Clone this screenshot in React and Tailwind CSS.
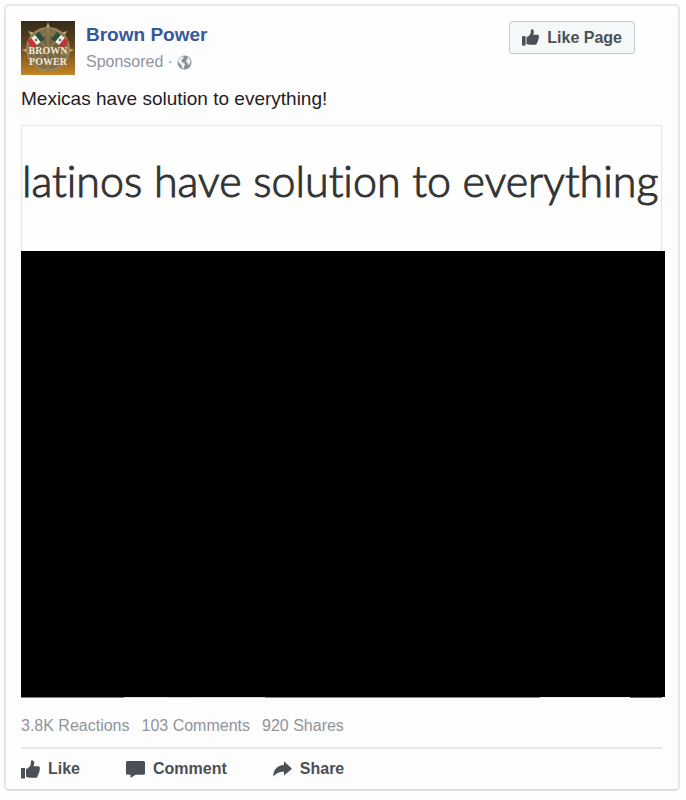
import React from "react";

function ThumbIcon({ className }) {
  return (
    <svg viewBox="0 0 19 19" className={className} fill="currentColor" aria-hidden="true">
      <path d="M0 8h4v10.500H0z" />
      <path d="M5 9.300 C7.500 8.300 9.400 6.300 9.800 3.800 L10 1.200 C10.100 .4 10.700 0 11.400 .2 C12.800 .6 13.400 1.900 13.200 3.600 L12.500 6.300 H17 C18.500 6.300 19.200 7.400 18.600 8.500 C19.200 9.300 19 10.500 18.200 11 C18.600 11.900 18.300 13 17.500 13.400 C17.800 14.300 17.400 15.200 16.600 15.600 C16.800 16.900 15.900 17.700 14.600 17.700 H9.500 C7.800 17.700 6.500 17.300 5 16.800z" />
    </svg>
  );
}

function CommentIcon() {
  return (
    <svg viewBox="0 0 19 17" className="h-[17px] w-[19px]" fill="currentColor" aria-hidden="true">
      <path d="M1.500 0h16Q19 0 19 1.500v10.800q0 1.500-1.500 1.500H9.500L4.600 17v-3.200H1.500Q0 13.800 0 12.300V1.500Q0 0 1.500 0z" />
    </svg>
  );
}

function ShareIcon() {
  return (
    <svg viewBox="0 0 19 16" className="h-4 w-[19px]" fill="currentColor" aria-hidden="true">
      <path d="M11 .3 18.500 7.200Q19 7.700 18.500 8.200L11 14.500V10.700C6.500 10.400 3.200 12 .3 15.600C.2 9 4 4.400 11 4z" />
    </svg>
  );
}

function GlobeIcon() {
  return (
    <svg viewBox="0 0 15 15" className="h-[15px] w-[15px]" role="img" aria-label="Public">
      <circle cx="7.500" cy="7.500" r="7" fill="#8b9095" />
      <path d="M.8 6 2.200 3.200 4.600 1.400 6.800 1.600 6.400 3.600 4.800 4.500 4.400 6.600 6.800 7.900 8.300 9 7.400 10.800 6.700 13.600 5 12.800 4.300 10.300 2.800 8.600z" fill="#f1f2f3" />
      <path d="M10 2 12.400 3.500 13.600 6.200 12.800 8.800 11.400 10.200 10.700 8.200 9.300 7 9.200 5 10.600 4.200z" fill="#f1f2f3" />
    </svg>
  );
}

function Flag({ transform, left, right }) {
  return (
    <g transform={transform}>
      <rect x="-7.500" y="-4.500" width="5" height="9" fill={left} />
      <rect x="-2.500" y="-4.500" width="5" height="9" fill="#f4f1e8" />
      <rect x="2.500" y="-4.500" width="5" height="9" fill={right} />
      <circle r="1.400" fill="#7d7450" />
    </g>
  );
}

function Avatar() {
  return (
    <svg viewBox="0 0 54 54" className="h-[54px] w-[54px] shrink-0" role="img" aria-label="Brown Power logo">
      <defs>
        <linearGradient id="ground" x1="0" y1="0" x2="0" y2="1">
          <stop offset="0" stopColor="#352a19" />
          <stop offset=".45" stopColor="#5e4723" />
          <stop offset=".8" stopColor="#a06d22" />
          <stop offset="1" stopColor="#c38628" />
        </linearGradient>
      </defs>
      <rect width="54" height="54" fill="url(#ground)" />
      <path d="M27 1 29 7H25zM7 10 14 12 11 16zM46 10 43 16 40 12zM1 29 7 27V32zM53 29 47 27V32z" fill="#bea675" />
      <circle cx="27" cy="28" r="21" fill="#806d4a" stroke="#9a8459" strokeWidth="2" />
      <circle cx="27" cy="28" r="15" fill="#76633f" stroke="#8b7650" strokeWidth="2" />
      <path d="M27 7V49M12 13 42 43M42 13 12 43" stroke="#8d7851" strokeWidth="2" />
      <Flag transform="translate(15 19) rotate(-38)" left="#c92f37" right="#28513c" />
      <Flag transform="translate(39 19) rotate(38)" left="#28513c" right="#c92f37" />
      <g fill="#f3e9d8" fontFamily="'Liberation Serif', serif" fontSize="10" fontWeight="700" textAnchor="middle">
        <text x="27" y="33">BROWN</text>
        <text x="27" y="44">POWER</text>
      </g>
    </svg>
  );
}

export default function App() {
  return (
    <main className="min-h-screen bg-[#fdfdfd] px-1 pt-1 pb-2 font-['Liberation_Sans',Arial,sans-serif]">
      <article className="mr-0.5 rounded-[5px] border-2 border-t-[#e9e9ea] border-r-[#e6e6e7] border-b-[#dddedf] border-l-[#e6e6e7] bg-[#fdfdfd] pt-[15px] pr-4 pl-[15px]">
        <header className="flex items-start">
          <Avatar />
          <div className="ml-[11px] flex-1">
            <h1 className="text-[19px] leading-7 font-bold text-[#365899]">
              <a href="#page">Brown Power</a>
            </h1>
            <p className="flex items-center gap-1 text-base leading-[26px] text-[#90949c]">
              <span>Sponsored</span>
              <span>·</span>
              <GlobeIcon />
            </p>
          </div>
          <button type="button" className="mr-[27px] flex h-[33px] items-center gap-2 rounded-[3px] border border-[#c6cdcf] bg-[#f5f8f9] px-3 text-base font-bold text-[#4b4f56]">
            <ThumbIcon className="h-[17px] w-[17px]" />
            Like Page
          </button>
        </header>

        <p className="mt-2.5 text-[19px] leading-7 text-[#1d2129]">Mexicas have solution to everything!</p>

        <figure className="mt-3">
          <figcaption className="flex h-[126px] items-start border border-b-0 border-[#e5e5e5] bg-[#fefefe] pt-7 font-['Lato',sans-serif] text-[43px] leading-[54px] font-light whitespace-nowrap text-[#333333] [-webkit-text-stroke:1px_#333333] [font-variant-ligatures:none]">
            latinos have solution to everything
          </figcaption>
          <div className="-mr-[3px] h-[446px] bg-black" />
          <div className="flex h-px">
            <span className="w-[16%] bg-[#8a7d55]" />
            <span className="w-[7%] bg-[#dddddd]" />
            <span className="w-[4%] bg-[#d8d28d]" />
            <span className="w-[11%] bg-[#c5d8df]" />
            <span className="w-[43%] bg-[#36a0c5]" />
            <span className="w-[14%] bg-[#eeeeee]" />
            <span className="w-[5%] bg-[#a14e59]" />
          </div>
        </figure>

        <ul className="flex h-[49px] gap-3 pt-4 text-base leading-6 text-[#90949c]">
          <li>3.8K Reactions</li>
          <li>103 Comments</li>
          <li>920 Shares</li>
        </ul>

        <footer className="flex h-[42px] items-center border-t-2 border-[#e7e8ea] text-base font-bold text-[#4b4f56]">
          <button type="button" className="flex items-center gap-2">
            <ThumbIcon className="h-[19px] w-[19px]" />
            Like
          </button>
          <button type="button" className="ml-[46px] flex items-center gap-2">
            <CommentIcon />
            Comment
          </button>
          <button type="button" className="ml-[46px] flex items-center gap-2">
            <ShareIcon />
            Share
          </button>
        </footer>
      </article>
    </main>
  );
}
